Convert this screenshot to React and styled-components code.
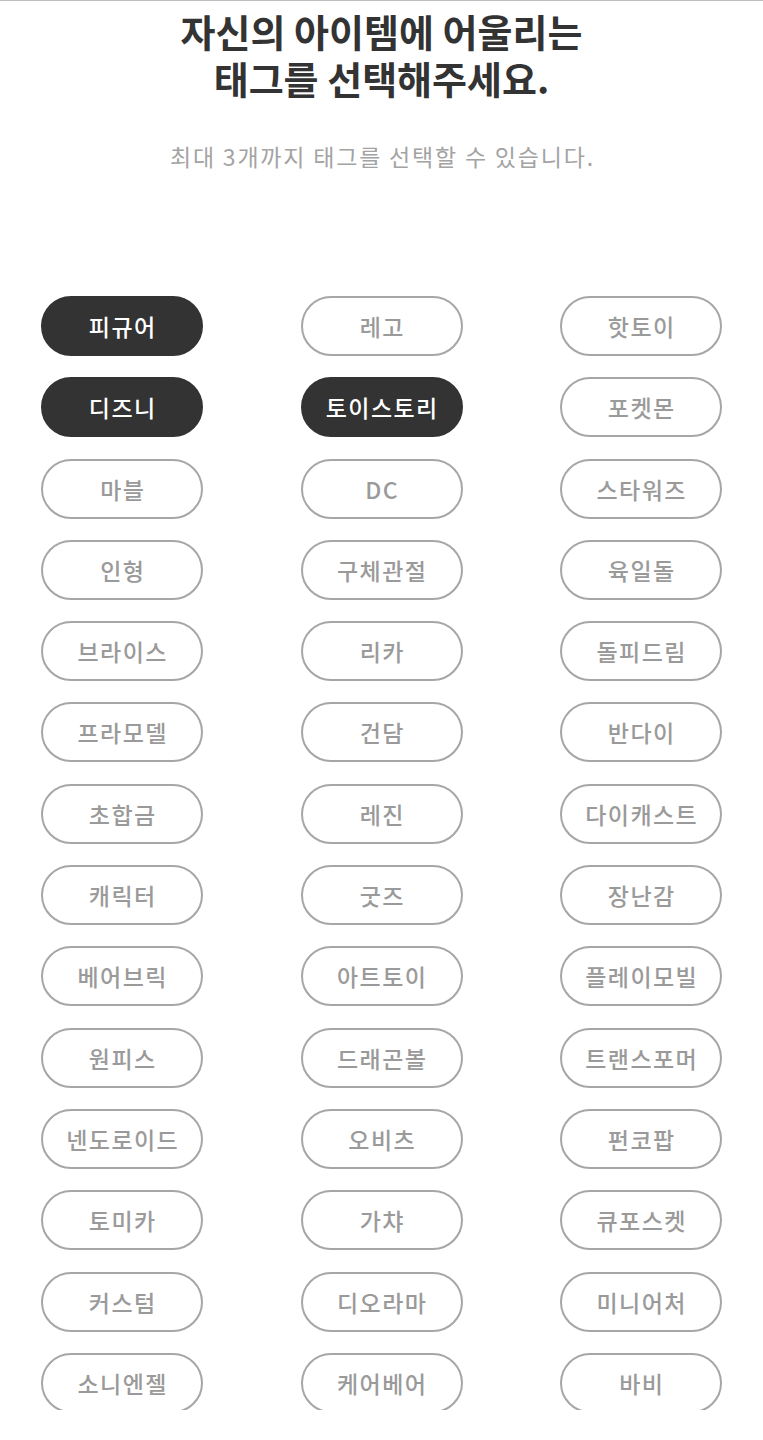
import React, { useState } from "react";
import styled, { createGlobalStyle } from "styled-components";

const GlobalStyle = createGlobalStyle`
  html, body { margin: 0; padding: 0; background: #fff; }
  body { font-family: "Noto Sans CJK KR", "Noto Sans", sans-serif; }
  * { box-sizing: border-box; }
`;

const Page = styled.div`
  width: 763px;
  height: 1410px;
  overflow: hidden;
  border-top: 1px solid #bdbdbd;
  display: flex;
  flex-direction: column;
  align-items: center;
`;

const Title = styled.h1`
  margin: 6px 0 0;
  font-size: 38px;
  font-weight: 700;
  color: #333;
  text-align: center;
  letter-spacing: 0;
`;

const TitleLine = styled.span`
  display: block;
  line-height: 47px;
  height: 47px;
`;

const Subtitle = styled.p`
  margin: 40px 0 0;
  font-size: 23px;
  line-height: 30px;
  font-weight: 400;
  color: #a3a3a3;
  text-align: center;
  letter-spacing: 1.8px;
  padding-left: 1.8px;
`;

const TagGrid = styled.div`
  margin-top: 125px;
  display: grid;
  grid-template-columns: repeat(3, 162px);
  column-gap: 97.5px;
  row-gap: 21.3px;
  justify-content: center;
`;

const Tag = styled.button`
  width: 162px;
  height: 60px;
  border-radius: 30px;
  border: 2px solid ${(p) => (p.$selected ? "#333" : "#a6a6a6")};
  background: ${(p) => (p.$selected ? "#333" : "#fff")};
  color: ${(p) => (p.$selected ? "#fff" : "#9a9a9a")};
  font-family: "Noto Sans CJK KR", "Noto Sans", sans-serif;
  font-size: 23px;
  font-weight: 500;
  letter-spacing: 1.4px;
  padding: 0 0 0 1.4px;
  display: flex;
  align-items: center;
  justify-content: center;
  cursor: pointer;
`;

const TAGS = [
  "피규어", "레고", "핫토이",
  "디즈니", "토이스토리", "포켓몬",
  "마블", "DC", "스타워즈",
  "인형", "구체관절", "육일돌",
  "브라이스", "리카", "돌피드림",
  "프라모델", "건담", "반다이",
  "초합금", "레진", "다이캐스트",
  "캐릭터", "굿즈", "장난감",
  "베어브릭", "아트토이", "플레이모빌",
  "원피스", "드래곤볼", "트랜스포머",
  "넨도로이드", "오비츠", "펀코팝",
  "토미카", "가챠", "큐포스켓",
  "커스텀", "디오라마", "미니어처",
  "소니엔젤", "케어베어", "바비",
];

export default function App() {
  const [selected, setSelected] = useState(["피규어", "디즈니", "토이스토리"]);
  const toggle = (t) =>
    setSelected((s) =>
      s.includes(t) ? s.filter((x) => x !== t) : s.length < 3 ? [...s, t] : s
    );
  return (
    <>
      <GlobalStyle />
      <Page>
        <Title>
          <TitleLine>자신의 아이템에 어울리는</TitleLine>
          <TitleLine>태그를 선택해주세요.</TitleLine>
        </Title>
        <Subtitle>최대 3개까지 태그를 선택할 수 있습니다.</Subtitle>
        <TagGrid>
          {TAGS.map((t) => (
            <Tag key={t} $selected={selected.includes(t)} onClick={() => toggle(t)}>
              {t}
            </Tag>
          ))}
        </TagGrid>
      </Page>
    </>
  );
}
